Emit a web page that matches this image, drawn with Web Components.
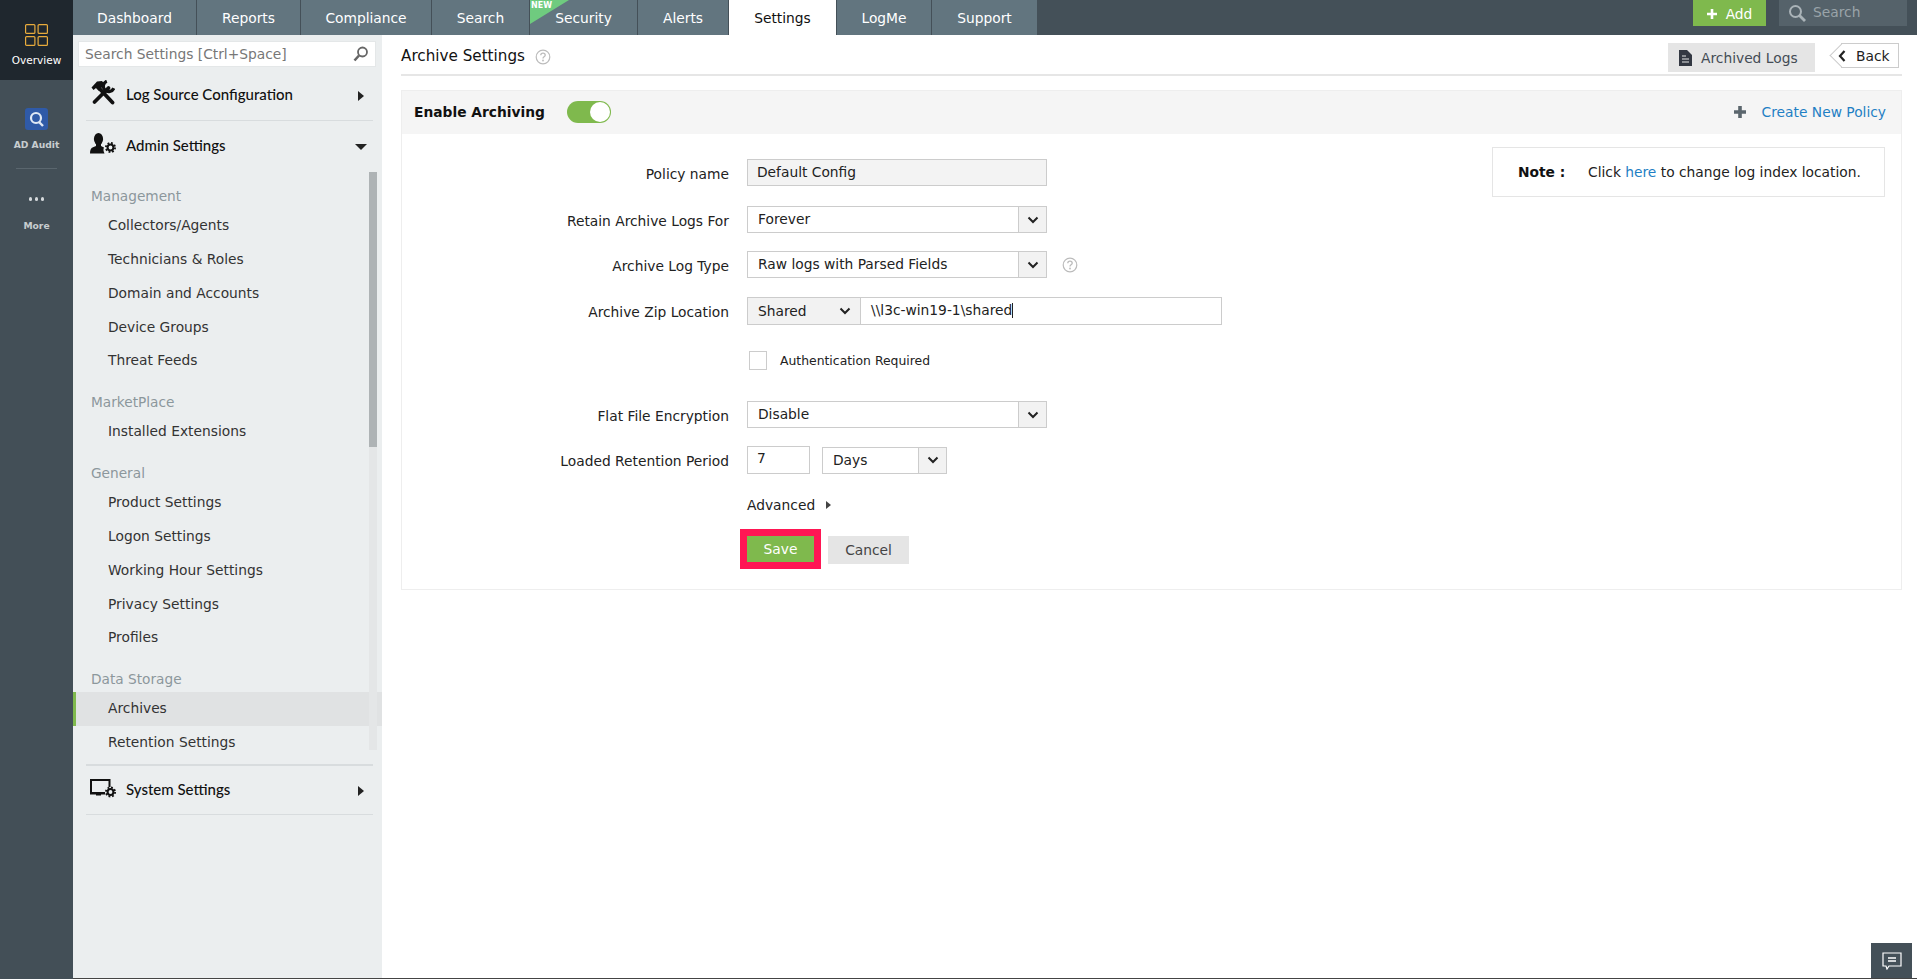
<!DOCTYPE html>
<html>
<head>
<meta charset="utf-8">
<title>Archive Settings</title>
<style>
  html, body { margin: 0; height: 100%; }
  body { font: 13.8px "DejaVu Sans", sans-serif; color: #222; background: #fff; overflow: hidden; }
</style>
</head>
<body>
<app-shell></app-shell>
<script>
const gear = (x, y) => `<g fill="none" stroke="#111"><circle cx="${x}" cy="${y}" r="2.900" stroke-width="2"/><circle cx="${x}" cy="${y}" r="4.600" stroke-width="1.800" stroke-dasharray="1.800 1.810"/></g>`;
const ICON = {
  tools: `<svg width="24" height="26" viewBox="0 0 24 26" style="margin-left:1px"><path d="M7 7l14.500 15.500" stroke="#111" stroke-width="3.800" stroke-linecap="round"/><path d="M.5 7.500L6 1.500l5-.5 2.500 3-5.500 7-3-3-2.500 2z" fill="#111"/><path d="M17.500 8L3.500 22" stroke="#111" stroke-width="3.800" stroke-linecap="round"/><path d="M15.800 1.200a5.400 5.400 0 1 0 7 7" fill="none" stroke="#111" stroke-width="3.200"/></svg>`,
  admin: `<svg width="26" height="21" viewBox="0 0 26 21"><ellipse cx="8.500" cy="6" rx="4.600" ry="6" fill="#111"/><path d="M6 10h5v3l3 1.500c-1 2-.5 4 .5 6H0c0-3 .8-5.500 3-6.200L6 13z" fill="#111"/>${gear(20.500, 14.500)}</svg>`,
  system: `<svg width="26" height="20" viewBox="0 0 26 20"><path d="M1 15V2h18.500v7" fill="none" stroke="#111" stroke-width="2"/><path d="M0 14h15v2.500H0zM6 16h5v1.500H6z" fill="#111"/>${gear(20.500, 14)}</svg>`,
  chevron: `<svg width="12" height="8" viewBox="0 0 12 8"><path d="M1.500 1.500L6 6l4.500-4.500" fill="none" stroke="#222" stroke-width="2"/></svg>`,
  help: `<svg width="16" height="16" viewBox="0 0 16 16"><circle cx="8" cy="8" r="6.800" fill="none" stroke="#bbb" stroke-width="1.200"/><path d="M5.800 6.300C5.800 4.900 6.800 4.200 8 4.200s2.200.8 2.200 2c0 1.600-2.200 1.700-2.200 3.300" fill="none" stroke="#bbb" stroke-width="1.300"/><circle cx="8" cy="11.500" r=".9" fill="#bbb"/></svg>`
};

class AppShell extends HTMLElement {
  connectedCallback() {
    this.attachShadow({ mode: 'open' }).innerHTML = `
      <style>
        :host { display: grid; grid-template-columns: 73px 1fr; height: 979px; }
        .right { display: grid; grid-template-rows: 35px 1fr; min-width: 0; }
        .body { display: grid; grid-template-columns: 309px 1fr; min-height: 0; position: relative; }
        .body::after { content: ""; position: absolute; left: 0; right: 0; bottom: 0; height: 1px; background: #444; }
        .chat { position: absolute; right: 5px; bottom: 0; width: 41px; height: 36px; background: #445058;
          display: flex; align-items: center; justify-content: center; }
      </style>
      <side-rail></side-rail>
      <div class="right">
        <top-bar></top-bar>
        <div class="body">
          <settings-menu></settings-menu>
          <archive-page></archive-page>
          <div class="chat">
            <svg width="20" height="18" viewBox="0 0 20 18"><path d="M1 1h18v13H7l-2 3-1-3H1z" fill="none" stroke="#fff" stroke-width="1.200"/><path d="M6 6h8M6 9h8" stroke="#fff" stroke-width="1.400"/></svg>
          </div>
        </div>
      </div>`;
  }
}

class SideRail extends HTMLElement {
  connectedCallback() {
    this.attachShadow({ mode: 'open' }).innerHTML = `
      <style>
        :host { display: flex; flex-direction: column; background: #434f57; color: #c8cdd0; font: bold 9.200px "DejaVu Sans", sans-serif; text-align: center; }
        .over { height: 80px; background: #1f272e; color: #fff; display: flex; flex-direction: column; align-items: center; padding-top: 24px; box-sizing: border-box; }
        .over span { margin-top: 8px; font-weight: normal; font-size: 10.500px; }
        .audit { height: 88px; box-sizing: border-box; padding-top: 28px; display: flex; flex-direction: column; align-items: center; }
        .audit span { margin-top: 9px; }
        .line { height: 1px; width: 41px; margin: 0 auto; background: #5a666e; }
        .more { padding-top: 28px; display: flex; flex-direction: column; align-items: center; }
        .more span { margin-top: 19px; }
        .dots { display: flex; gap: 2.500px; }
        .dots i { width: 3.500px; height: 3.500px; border-radius: 50%; background: #d5d9dc; }
      </style>
      <div class="over">
        <svg width="23" height="22" viewBox="0 0 23 22" fill="none" stroke="#e8ab3c" stroke-width="1.200"><rect x=".6" y=".6" width="9.300" height="8.800" rx="1"/><rect x="13.100" y=".6" width="9.300" height="8.800" rx="1"/><rect x=".6" y="12.600" width="9.300" height="8.800" rx="1"/><rect x="13.100" y="12.600" width="9.300" height="8.800" rx="1"/></svg>
        <span>Overview</span>
      </div>
      <div class="audit">
        <svg width="23" height="22" viewBox="0 0 23 22"><rect width="23" height="22" rx="3" fill="#2f5aa8"/><circle cx="11" cy="10" r="5" fill="none" stroke="#dfe8f5" stroke-width="2.200"/><path d="M14 14l4 4" stroke="#dfe8f5" stroke-width="2.400"/></svg>
        <span>AD Audit</span>
      </div>
      <div class="line"></div>
      <div class="more">
        <div class="dots"><i></i><i></i><i></i></div>
        <span>More</span>
      </div>`;
  }
}

class TopBar extends HTMLElement {
  connectedCallback() {
    const tabs = [['Dashboard', 124], ['Reports', 104], ['Compliance', 131], ['Search', 98], ['Security', 108, 'new'], ['Alerts', 91], ['Settings', 108, 'on'], ['LogMe', 95], ['Support', 106]];
    this.attachShadow({ mode: 'open' }).innerHTML = `
      <style>
        :host { display: flex; background: #445058; color: #fff; height: 35px; }
        .tab { box-sizing: border-box; height: 35px; background: #62757f; border-right: 1px solid #445058; display: flex; align-items: center; justify-content: center; position: relative; }
        .tab.on { background: #fff; color: #111; }
        .flag { position: absolute; left: 0; top: 0; width: 39px; height: 24px; background: #6fcb7f; clip-path: polygon(0 0, 100% 0, 0 100%); }
        .flag b { position: absolute; left: 1px; top: 1px; font-size: 8px; line-height: 9px; color: #fff; }
        .end { margin-left: auto; display: flex; gap: 13px; padding-right: 10px; align-items: flex-start; }
        .add { width: 73px; height: 26px; background: #7fb94d; display: flex; align-items: center; justify-content: center; gap: 9px; padding-top: 1px; box-sizing: border-box; }
        .find { width: 128px; height: 26px; background: #55626a; color: #9aa4a9; display: flex; align-items: center; gap: 7px; padding: 0 0 3px 9px; box-sizing: border-box; }
        .find svg { margin-top: 3px; }
      </style>
      ${tabs.map(([name, w, kind]) => `<div class="tab ${kind || ''}" style="width:${w}px">${kind === 'new' ? '<div class="flag"><b>NEW</b></div>' : ''}${name}</div>`).join('')}
      <div class="end">
        <div class="add"><svg width="10" height="10" viewBox="0 0 10 10"><path d="M5 0v10M0 5h10" stroke="#fff" stroke-width="2.600"/></svg>Add</div>
        <div class="find"><svg width="18" height="18" viewBox="0 0 18 18" fill="none" stroke="#aab3b8"><circle cx="7.500" cy="7.500" r="5.500" stroke-width="2"/><path d="M11.500 11.500l5.500 5.500" stroke-width="2.800"/></svg>Search</div>
      </div>`;
  }
}

class MenuHead extends HTMLElement {
  connectedCallback() {
    const open = this.hasAttribute('open');
    this.attachShadow({ mode: 'open' }).innerHTML = `
      <style>
        :host { display: flex; align-items: center; height: 50px; box-sizing: border-box; color: #111; font: 500 15px Lato, sans-serif; position: relative; }
        .ico { width: 36px; padding-left: 17px; flex: none; display: flex; }
        .car { position: absolute; right: ${open ? '15px' : '18px'}; top: 50%; margin-top: -4px; width: 0; height: 0; border-style: solid;
          ${open ? 'border-width: 6px 6px 0 6px; border-color: #222 transparent transparent; margin-top: -3px;' : 'border-width: 5.500px 0 5.500px 6px; border-color: transparent transparent transparent #222;'} }
      </style>
      <span class="ico"><slot name="icon"></slot></span>
      <span><slot></slot></span>
      <span class="car"></span>`;
  }
}

class MenuGroup extends HTMLElement {
  connectedCallback() {
    this.attachShadow({ mode: 'open' }).innerHTML = `
      <style>
        :host { display: block; padding-top: 14px; }
        h4 { margin: 0; font: normal 13.700px/20px "DejaVu Sans", sans-serif; color: #8c979c; padding: 0 0 0 18px; height: 23px; }
      </style>
      <h4>${this.getAttribute('title')}</h4>
      <slot></slot>`;
  }
}

class MenuItem extends HTMLElement {
  connectedCallback() {
    this.attachShadow({ mode: 'open' }).innerHTML = `
      <style>
        :host { display: block; height: 33.850px; line-height: 33px; padding-left: 35px; color: #333; box-sizing: border-box; white-space: nowrap; }
        :host([on]) { background: #e0e2e3; border-left: 3px solid #7fb94d; padding-left: 32px; }
      </style>
      <slot></slot>`;
  }
}

class SettingsMenu extends HTMLElement {
  connectedCallback() {
    this.attachShadow({ mode: 'open' }).innerHTML = `
      <style>
        :host { display: block; background: #ebeeef; position: relative; min-height: 0; overflow: hidden; }
        .search { box-sizing: border-box; margin: 6px 6px 0 5px; height: 26px; background: #fff; border: 1px solid #e4e7e8; color: #777; display: flex; align-items: center; justify-content: space-between; padding: 0 6px; white-space: nowrap; }
        .sep { height: 1px; background: #d8dcde; margin: 0 9px 0 13px; }
        .sep.bold { height: 2px; margin-top: 14px; }
        .head1 { margin-top: 2px; height: 51px; padding-bottom: 1px; }
        .head2 { height: 51px; padding-bottom: 3px; }
        .head3 { height: 48px; padding-bottom: 2px; }
        .scroll { height: 578px; overflow: hidden; position: relative; }
        .track { position: absolute; right: 5px; top: 0; bottom: 0; width: 8px; background: #e4e6e7; }
        .thumb { position: absolute; right: 5px; top: 0; width: 8px; height: 275px; background: #aeb3b5; }
      </style>
      <div class="search">Search Settings [Ctrl+Space]<svg width="16" height="16" viewBox="0 0 16 16" fill="none" stroke="#666"><circle cx="9.500" cy="6" r="4.500" stroke-width="1.800"/><path d="M6 9.500L1.500 14.500" stroke-width="2.600"/></svg></div>
      <menu-head class="head1"><span slot="icon">${ICON.tools}</span>Log Source Configuration</menu-head>
      <div class="sep"></div>
      <menu-head class="head2" open><span slot="icon">${ICON.admin}</span>Admin Settings</menu-head>
      <div class="scroll">
        <div class="track"></div><div class="thumb"></div>
        <div class="list">
          <menu-group title="Management">
            <menu-item>Collectors/Agents</menu-item><menu-item>Technicians &amp; Roles</menu-item><menu-item>Domain and Accounts</menu-item><menu-item>Device Groups</menu-item><menu-item>Threat Feeds</menu-item>
          </menu-group>
          <menu-group title="MarketPlace"><menu-item>Installed Extensions</menu-item></menu-group>
          <menu-group title="General">
            <menu-item>Product Settings</menu-item><menu-item>Logon Settings</menu-item><menu-item>Working Hour Settings</menu-item><menu-item>Privacy Settings</menu-item><menu-item>Profiles</menu-item>
          </menu-group>
          <menu-group title="Data Storage"><menu-item on>Archives</menu-item><menu-item>Retention Settings</menu-item></menu-group>
        </div>
      </div>
      <div class="sep bold"></div>
      <menu-head class="head3"><span slot="icon">${ICON.system}</span>System Settings</menu-head>
      <div class="sep"></div>`;
  }
}

class PickBox extends HTMLElement {
  connectedCallback() {
    const w = this.getAttribute('width');
    this.attachShadow({ mode: 'open' }).innerHTML = `
      <style>
        :host { display: flex; box-sizing: border-box; width: ${w}px; height: 27px; border: 1px solid #ccc; background: #fff; align-items: stretch; color: #222; }
        .val { flex: 1; padding-left: 10px; line-height: 24px; white-space: nowrap; }
        .arr { width: 27px; background: #f2f2f2; border-left: 1px solid #ccc; display: flex; align-items: center; justify-content: center; }
      </style>
      <div class="val"><slot></slot></div>
      <div class="arr">${ICON.chevron}</div>`;
  }
}

class FormRow extends HTMLElement {
  connectedCallback() {
    this.attachShadow({ mode: 'open' }).innerHTML = `
      <style>
        :host { display: grid; grid-template-columns: 327px 1fr; column-gap: 18px; align-items: center; }
        .lab { text-align: right; color: #222; white-space: nowrap; padding-top: 2px; }
        .ctl { display: flex; align-items: center; }
      </style>
      <div class="lab">${this.getAttribute('label') || ''}</div>
      <div class="ctl"><slot></slot></div>`;
  }
}

class ArchivePage extends HTMLElement {
  connectedCallback() {
    this.attachShadow({ mode: 'open' }).innerHTML = `
      <style>
        :host { display: block; padding: 0 15px 0 19px; min-width: 0; position: relative; }
        .head { height: 41px; border-bottom: 2px solid #e6e6e6; box-sizing: border-box; display: flex; align-items: flex-start; }
        h1 { margin: 10px 0 0; font: normal 15.200px/22px "DejaVu Sans", sans-serif; color: #111; }
        .head .q { margin: 14px 0 0 10px; }
        .logs { margin: 8px 26px 0 auto; width: 147px; height: 29px; background: #e5e5e5; display: flex; align-items: center; gap: 9px; box-sizing: border-box; padding-left: 11px; color: #444c55; }
        .back { margin: 8px 3px 0 0; height: 25px; width: 58px; box-sizing: border-box; border: 1px solid #ccc; border-left: 0; position: relative; display: flex; align-items: center; gap: 10px; color: #222; }
        .back svg { margin-left: -3px; }
        .back::before { content: ""; position: absolute; left: -8.500px; top: 3px; width: 17px; height: 17px; border-left: 1px solid #ccc; border-bottom: 1px solid #ccc; box-sizing: border-box; transform: rotate(45deg); }
        .panel { margin-top: 14px; border: 1px solid #eee; height: 500px; box-sizing: border-box; position: relative; }
        .bar { height: 43px; background: #f5f5f5; display: flex; align-items: center; padding: 0 15px 1px 12px; box-sizing: border-box; }
        .bar b { color: #111; }
        .tog { margin-left: 22px; width: 44px; height: 22px; border-radius: 11px; background: #7fb94d; position: relative; }
        .tog i { position: absolute; right: 1px; top: 1px; width: 20px; height: 20px; border-radius: 50%; background: #fff; }
        .new { margin-left: auto; display: flex; align-items: center; gap: 16px; color: #1f7fc4; }
        .note { position: absolute; left: 1090px; top: 56px; width: 393px; height: 50px; box-sizing: border-box; border: 1px solid #e5e5e5; display: flex; align-items: center; padding-left: 25px; color: #222; }
        .note b { width: 70px; color: #111; }
        .note a { color: #1f7fc4; }
        .form { padding-top: 25px; display: flex; flex-direction: column; }
        .pol { width: 300px; height: 27px; box-sizing: border-box; border: 1px solid #ccc; background: #f3f3f3; padding-left: 9px; line-height: 25px; }
        .zip { display: flex; height: 28px; box-sizing: border-box; border: 1px solid #ccc; width: 475px; }
        .zip .sel { width: 113px; background: #f2f2f2; border-right: 1px solid #ccc; display: flex; align-items: center; justify-content: space-between; padding: 0 9px 0 10px; box-sizing: border-box; }
        .zip .in { flex: 1; padding-left: 10px; line-height: 25px; }
        .caret { display: inline-block; width: 1px; height: 15px; background: #222; vertical-align: -3px; }
        .chk { width: 18px; height: 19px; box-sizing: border-box; border: 1px solid #ccc; margin: 0 13px 0 2px; }
        .auth { font-size: 12.400px; color: #222; }
        .num { width: 63px; height: 28px; box-sizing: border-box; border: 1px solid #ccc; padding-left: 9px; line-height: 23px; margin-right: 12px; }
        .adv { display: flex; align-items: center; gap: 11px; color: #222; }
        .adv i { width: 0; height: 0; border-style: solid; border-width: 4.500px 0 4.500px 5px; border-color: transparent transparent transparent #444; }
        .btns { display: flex; align-items: flex-start; gap: 7px; margin-left: -7px; }
        .save { width: 67px; height: 26px; box-sizing: content-box; background: #7fb94d; border: 7px solid #ff1654; color: #fff; display: flex; align-items: center; justify-content: center; }
        .cancel { margin-top: 7px; width: 81px; height: 28px; background: #e5e5e5; color: #444; display: flex; align-items: center; justify-content: center; }
      </style>
      <div class="head">
        <h1>Archive Settings</h1><span class="q">${ICON.help}</span>
        <div class="logs"><svg width="13" height="16" viewBox="0 0 13 16"><path d="M0 0h8l5 5v11H0z" fill="#333842"/><path d="M3 6h4M3 9h7M3 12h7" stroke="#e5e5e5" stroke-width="1.200"/></svg>Archived Logs</div>
        <div class="back"><svg width="8" height="12" viewBox="0 0 8 12" style="position:relative"><path d="M6.500 1L2 6l4.500 5" fill="none" stroke="#222" stroke-width="2.200"/></svg>Back</div>
      </div>
      <div class="panel">
        <div class="bar">
          <b>Enable Archiving</b><span class="tog"><i></i></span>
          <span class="new"><svg width="12" height="12" viewBox="0 0 12 12"><path d="M6 0v12M0 6h12" stroke="#5b666d" stroke-width="3.600"/></svg>Create New Policy</span>
        </div>
        <div class="note"><b>Note :</b><span>Click <a>here</a> to change log index location.</span></div>
        <div class="form">
          <form-row label="Policy name" style="height:27px"><div class="pol">Default Config</div></form-row>
          <form-row label="Retain Archive Logs For" style="height:27px;margin-top:20px"><pick-box width="300">Forever</pick-box></form-row>
          <form-row label="Archive Log Type" style="height:27px;margin-top:18px"><pick-box width="300">Raw logs with Parsed Fields</pick-box><span style="margin-left:15px;display:flex">${ICON.help}</span></form-row>
          <form-row label="Archive Zip Location" style="height:28px;margin-top:19px"><div class="zip"><div class="sel">Shared ${ICON.chevron}</div><div class="in">\\\\l3c-win19-1\\shared<span class="caret"></span></div></div></form-row>
          <form-row style="height:19px;margin-top:26px"><span class="chk"></span><span class="auth">Authentication Required</span></form-row>
          <form-row label="Flat File Encryption" style="height:27px;margin-top:31px"><pick-box width="300">Disable</pick-box></form-row>
          <form-row label="Loaded Retention Period" style="height:27px;margin-top:18px"><div class="num">7</div><pick-box width="125">Days</pick-box></form-row>
          <form-row style="height:20px;margin-top:22px"><span class="adv">Advanced<i></i></span></form-row>
          <form-row style="height:40px;margin-top:14px"><div class="btns"><div class="save">Save</div><div class="cancel">Cancel</div></div></form-row>
        </div>
      </div>`;
  }
}

customElements.define('app-shell', AppShell);
customElements.define('side-rail', SideRail);
customElements.define('top-bar', TopBar);
customElements.define('menu-head', MenuHead);
customElements.define('menu-group', MenuGroup);
customElements.define('menu-item', MenuItem);
customElements.define('settings-menu', SettingsMenu);
customElements.define('pick-box', PickBox);
customElements.define('form-row', FormRow);
customElements.define('archive-page', ArchivePage);
</script>
</body>
</html>
